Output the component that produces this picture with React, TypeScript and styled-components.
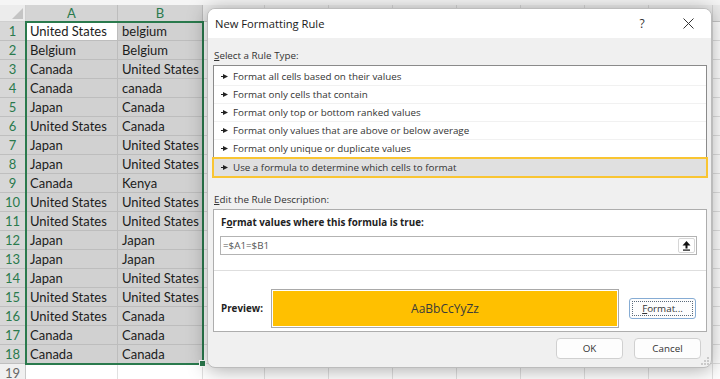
import styled, { createGlobalStyle } from "styled-components";

const GlobalStyle = createGlobalStyle`
  html, body {
    margin: 0;
    padding: 0;
    background: #fff;
  }
  body {
    width: 720px;
    height: 379px;
    overflow: hidden;
  }
`;

const colA = [
  "United States", "Belgium", "Canada", "Canada", "Japan", "United States",
  "Japan", "Japan", "Canada", "United States", "United States", "Japan",
  "Japan", "Japan", "United States", "United States", "Canada", "Canada",
];
const colB = [
  "belgium", "Belgium", "United States", "canada", "Canada", "Canada",
  "United States", "United States", "Kenya", "United States", "United States", "Japan",
  "Japan", "United States", "United States", "Canada", "Canada", "Canada",
];
const letters = ["A", "B", "C", "D", "E", "F", "G", "H", "I", "J", "K"];

const ruleTypes = [
  "Format all cells based on their values",
  "Format only cells that contain",
  "Format only top or bottom ranked values",
  "Format only values that are above or below average",
  "Format only unique or duplicate values",
  "Use a formula to determine which cells to format",
];

const Screen = styled.div`
  position: relative;
  width: 720px;
  height: 379px;
  overflow: hidden;
  background: #fff;
  font-family: Lato, "Liberation Sans", sans-serif;
`;

// ---- spreadsheet ----

const Sheet = styled.div`
  display: grid;
  grid-template-columns: 26px 92px 85px 62px repeat(8, 64px);
  grid-template-rows: 5px 17px repeat(19, 19px);
`;

const Strip = styled.div`
  grid-column: 1 / -1;
  background: #f5f5f5;
`;

const Corner = styled.div`
  position: relative;
  background: #ececec;
  border-right: 1px solid #cfcfcf;
  border-bottom: 1px solid #cfcfcf;
  box-sizing: border-box;
`;

const CornerMark = styled.div`
  position: absolute;
  right: 2px;
  bottom: 2px;
  width: 0;
  height: 0;
  border-left: 11px solid transparent;
  border-bottom: 11px solid #c4c4c4;
`;

const ColHeader = styled.div<{ $sel?: boolean }>`
  display: flex;
  align-items: center;
  justify-content: center;
  box-sizing: border-box;
  overflow: hidden;
  background: ${({ $sel }) => ($sel ? "#d4d4d4" : "#ececec")};
  color: ${({ $sel }) => ($sel ? "#2a7a4d" : "#555")};
  border-right: 1px solid ${({ $sel }) => ($sel ? "#bdbdbd" : "#d4d4d4")};
  border-bottom: 1px solid #c8c8c8;
  font-size: 13px;
`;

const RowHeader = styled.div<{ $sel?: boolean }>`
  display: flex;
  align-items: center;
  justify-content: center;
  box-sizing: border-box;
  background: ${({ $sel }) => ($sel ? "#d7d7d7" : "#f0f0f0")};
  color: ${({ $sel }) => ($sel ? "#2a7a4d" : "#666")};
  border-bottom: 1px solid ${({ $sel }) => ($sel ? "#bfbfbf" : "#d8d8d8")};
  border-right: 1px solid #c8c8c8;
  font-size: 13px;
`;

const Cell = styled.div<{ $sel?: boolean; $active?: boolean }>`
  display: flex;
  align-items: center;
  box-sizing: border-box;
  padding-left: 4px;
  white-space: nowrap;
  overflow: hidden;
  font-size: 13px;
  color: #1c1c1c;
  background: ${({ $sel, $active }) => ($active ? "#fff" : $sel ? "#d1d1d1" : "#fff")};
  border-right: 1px solid ${({ $sel }) => ($sel ? "#bdbdbd" : "#e1e1e1")};
  border-bottom: 1px solid ${({ $sel }) => ($sel ? "#bdbdbd" : "#e1e1e1")};
`;

const SelectionFrame = styled.div`
  position: absolute;
  left: 25px;
  top: 21px;
  width: 179px;
  height: 344px;
  box-sizing: border-box;
  border: 2px solid #2a7a4d;
  pointer-events: none;
`;

const FillHandle = styled.div`
  position: absolute;
  right: -4px;
  bottom: -4px;
  width: 5px;
  height: 5px;
  background: #2a7a4d;
  border: 1px solid #fff;
`;

// ---- dialog ----

const Dialog = styled.div`
  position: absolute;
  left: 207px;
  top: 8px;
  width: 505px;
  height: 360px;
  box-sizing: border-box;
  display: flex;
  flex-direction: column;
  background: #f0f0f0;
  border: 1px solid #bcbcbc;
  border-radius: 8px;
  overflow: hidden;
  box-shadow: 0 2px 20px rgba(0, 0, 0, 0.34);
  font-family: "Open Sans", "Noto Sans", sans-serif;
  font-size: 9.8px;
  color: #333;
`;

const TitleBar = styled.div`
  height: 29px;
  flex-shrink: 0;
  display: flex;
  align-items: center;
  background: #fff;
  padding-left: 7px;
`;

const Title = styled.div`
  flex: 1;
  font-size: 11.2px;
  color: #1a1a1a;
`;

const TitleButton = styled.div`
  width: 46px;
  height: 29px;
  display: flex;
  align-items: center;
  justify-content: center;
  font-size: 12px;
  color: #333;
`;

const Body = styled.div`
  display: flex;
  flex-direction: column;
  padding: 0 4px 0 5px;
`;

const SectionLabel = styled.div<{ $top: number }>`
  margin-top: ${({ $top }) => $top}px;
  height: 18px;
  line-height: 18px;
  padding-left: 1px;
  color: #333;
`;

const Key = styled.span`
  text-decoration: underline;
  text-underline-offset: 1px;
`;

const ListBox = styled.div`
  border: 1px solid #8a8a8a;
  background: #fff;
  padding: 2px 0 0;
  display: flex;
  flex-direction: column;
`;

const RuleItem = styled.div<{ $selected?: boolean }>`
  height: ${({ $selected }) => ($selected ? 21 : 18)}px;
  box-sizing: border-box;
  display: flex;
  align-items: center;
  gap: 5px;
  padding-left: 7px;
  color: #333;
  border-bottom: 1px solid #f1f1f1;
  ${({ $selected }) =>
    $selected &&
    `
    margin: -1px -2px -1px -2px;
    border: 2px solid #f9c532;
    background: #e0e0e0;
  `}
`;

const DescBox = styled.div`
  border: 1px solid #adadad;
  background: #fff;
  display: flex;
  flex-direction: column;
`;

const FormulaSection = styled.div`
  padding: 4px 9px 15px 6px;
  border-bottom: 1px solid #dedede;
`;

const BoldLabel = styled.div`
  height: 18px;
  line-height: 18px;
  margin-left: 1px;
  font-weight: 700;
  color: #222;
`;

const FormulaInput = styled.div`
  margin-top: 4px;
  height: 19px;
  box-sizing: border-box;
  border: 1px solid #b3b3b3;
  display: flex;
  align-items: center;
  justify-content: space-between;
  padding: 0 1px 0 2px;
  color: #555;
`;

const CollapseButton = styled.div`
  width: 17px;
  height: 15px;
  box-sizing: border-box;
  border: 1px solid #d6d6d6;
  border-radius: 2px;
  background: #fff;
  display: flex;
  align-items: center;
  justify-content: center;
`;

const PreviewSection = styled.div`
  display: flex;
  align-items: center;
  padding: 18px 0 3px 7px;
`;

const PreviewLabel = styled.div`
  width: 50px;
  font-weight: 700;
  color: #222;
`;

const PreviewFrame = styled.div`
  width: 348px;
  height: 39px;
  box-sizing: border-box;
  border: 1px solid #a9a9a9;
  padding: 1px;
  background: #fff;
`;

const PreviewFill = styled.div`
  height: 100%;
  background: #ffc000;
  display: flex;
  align-items: center;
  justify-content: center;
  font-size: 12px;
  color: #3b3b3b;
`;

const PushButton = styled.div<{ $focused?: boolean }>`
  width: 67px;
  height: 21px;
  box-sizing: border-box;
  display: flex;
  align-items: center;
  justify-content: center;
  padding: ${({ $focused }) => ($focused ? "2px" : "0")};
  background: #fdfdfd;
  border: 1px solid ${({ $focused }) => ($focused ? "#86acd4" : "#d0d0d0")};
  border-radius: ${({ $focused }) => ($focused ? 3 : 4)}px;
  color: #333;
`;

const FocusRing = styled.div`
  flex: 1;
  align-self: stretch;
  display: flex;
  align-items: center;
  justify-content: center;
  border: 1px dotted #5a6a7a;
`;

const FormatButton = styled(PushButton)`
  margin-left: 10px;
`;

const ButtonRow = styled.div`
  margin-top: 6px;
  display: flex;
  justify-content: flex-end;
  gap: 11px;
  padding-right: 6px;
`;

const Grip = styled.svg`
  position: absolute;
  right: 2px;
  bottom: 2px;
`;

function Arrow() {
  return (
    <svg width="7" height="5" viewBox="0 0 7 5">
      <rect x="0" y="2" width="3" height="1" fill="#222" />
      <path d="M2 0 L7 2.5 L2 5 Z" fill="#222" />
    </svg>
  );
}

function CloseIcon() {
  return (
    <svg width="11" height="11" viewBox="0 0 11 11">
      <path d="M0.5 0.5 L10.5 10.5 M10.5 0.5 L0.5 10.5" stroke="#333" strokeWidth="1" />
    </svg>
  );
}

function CollapseIcon() {
  return (
    <svg width="9" height="11" viewBox="0 0 9 11">
      <path d="M4.5 1 L8.5 5.5 H0.5 Z" fill="#111" />
      <rect x="3.5" y="5" width="2" height="3.5" fill="#111" />
      <rect x="1" y="9.5" width="7" height="1.2" fill="#111" />
    </svg>
  );
}

export default function App() {
  return (
    <Screen>
      <GlobalStyle />
      <Sheet>
        <Strip />
        <Corner>
          <CornerMark />
        </Corner>
        {letters.map((l, i) => (
          <ColHeader key={l} $sel={i < 2}>
            {i < 2 ? l : ""}
          </ColHeader>
        ))}
        {Array.from({ length: 19 }, (_, r) => {
          const sel = r < 18;
          return [
            <RowHeader key={`h${r}`} $sel={sel}>
              {r + 1}
            </RowHeader>,
            ...letters.map((l, c) => (
              <Cell
                key={`${l}${r}`}
                $sel={sel && c < 2}
                $active={r === 0 && c === 0}
              >
                {c === 0 && sel ? colA[r] : c === 1 && sel ? colB[r] : ""}
              </Cell>
            )),
          ];
        })}
      </Sheet>
      <SelectionFrame>
        <FillHandle />
      </SelectionFrame>

      <Dialog>
        <TitleBar>
          <Title>New Formatting Rule</Title>
          <TitleButton>?</TitleButton>
          <TitleButton>
            <CloseIcon />
          </TitleButton>
        </TitleBar>
        <Body>
          <SectionLabel $top={9}>
            <Key>S</Key>elect a Rule Type:
          </SectionLabel>
          <ListBox>
            {ruleTypes.map((t, i) => (
              <RuleItem key={t} $selected={i === ruleTypes.length - 1}>
                <Arrow />
                {t}
              </RuleItem>
            ))}
          </ListBox>
          <SectionLabel $top={13}>
            <Key>E</Key>dit the Rule Description:
          </SectionLabel>
          <DescBox>
            <FormulaSection>
              <BoldLabel>
                F<Key>o</Key>rmat values where this formula is true:
              </BoldLabel>
              <FormulaInput>
                =$A1=$B1
                <CollapseButton>
                  <CollapseIcon />
                </CollapseButton>
              </FormulaInput>
            </FormulaSection>
            <PreviewSection>
              <PreviewLabel>Preview:</PreviewLabel>
              <PreviewFrame>
                <PreviewFill>AaBbCcYyZz</PreviewFill>
              </PreviewFrame>
              <FormatButton $focused>
                <FocusRing>
                  <span>
                    <Key>F</Key>ormat...
                  </span>
                </FocusRing>
              </FormatButton>
            </PreviewSection>
          </DescBox>
          <ButtonRow>
            <PushButton>OK</PushButton>
            <PushButton>Cancel</PushButton>
          </ButtonRow>
        </Body>
        <Grip width="8" height="8" viewBox="0 0 8 8">
          <circle cx="7" cy="1" r="0.8" fill="#999" />
          <circle cx="4" cy="4" r="0.8" fill="#999" />
          <circle cx="7" cy="4" r="0.8" fill="#999" />
          <circle cx="1" cy="7" r="0.8" fill="#999" />
          <circle cx="4" cy="7" r="0.8" fill="#999" />
          <circle cx="7" cy="7" r="0.8" fill="#999" />
        </Grip>
      </Dialog>
    </Screen>
  );
}
